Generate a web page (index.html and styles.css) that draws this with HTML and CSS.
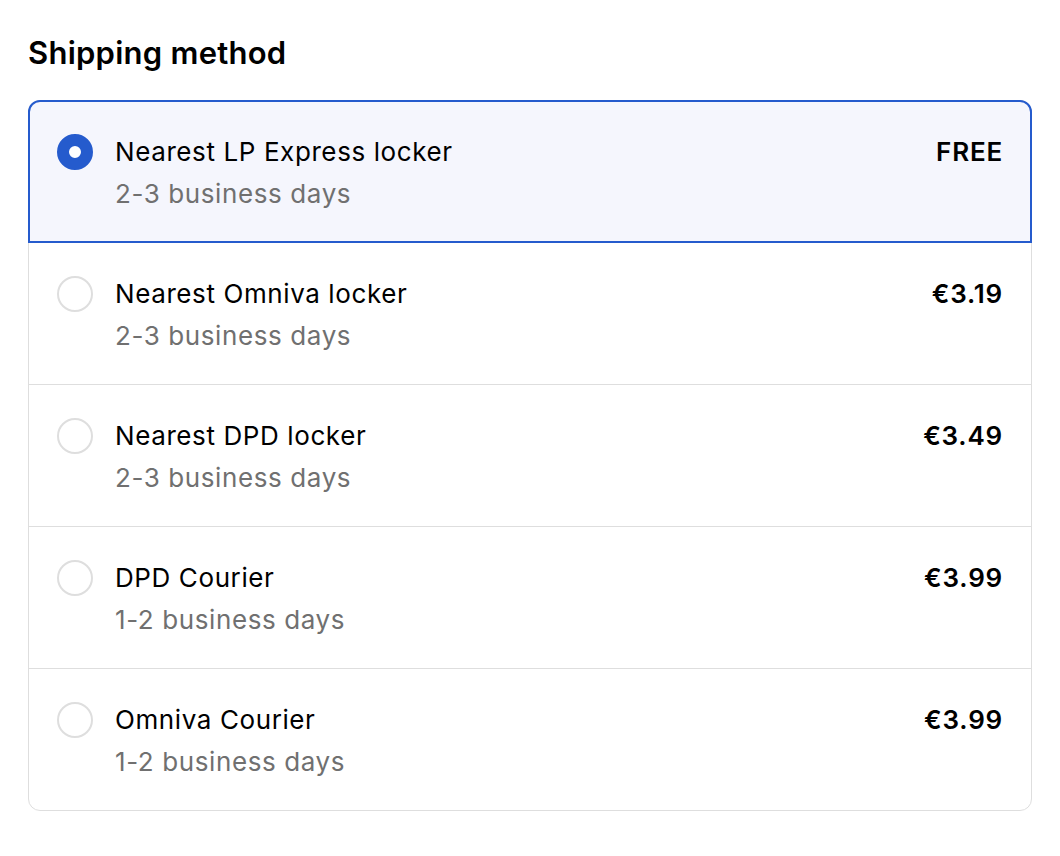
FILE: index.html
```html
<!DOCTYPE html>
<html lang="en">
<head>
<meta charset="utf-8">
<title>Shipping method</title>
<link rel="stylesheet" href="styles.css">
</head>
<body>
<section class="shipping">
  <h2 class="shipping__title">Shipping method</h2>
  <div class="options">
    <label class="option option--selected">
      <span class="radio radio--on"></span>
      <span class="option__text">
        <span class="option__name">Nearest LP Express locker</span>
        <span class="option__eta">2-3 business days</span>
      </span>
      <span class="option__price">FREE</span>
    </label>
    <label class="option">
      <span class="radio"></span>
      <span class="option__text">
        <span class="option__name">Nearest Omniva locker</span>
        <span class="option__eta">2-3 business days</span>
      </span>
      <span class="option__price">€3.19</span>
    </label>
    <label class="option">
      <span class="radio"></span>
      <span class="option__text">
        <span class="option__name">Nearest DPD locker</span>
        <span class="option__eta">2-3 business days</span>
      </span>
      <span class="option__price">€3.49</span>
    </label>
    <label class="option">
      <span class="radio"></span>
      <span class="option__text">
        <span class="option__name">DPD Courier</span>
        <span class="option__eta">1-2 business days</span>
      </span>
      <span class="option__price">€3.99</span>
    </label>
    <label class="option">
      <span class="radio"></span>
      <span class="option__text">
        <span class="option__name">Omniva Courier</span>
        <span class="option__eta">1-2 business days</span>
      </span>
      <span class="option__price">€3.99</span>
    </label>
  </div>
</section>
</body>
</html>
```

FILE: styles.css
```css
* { box-sizing: border-box; }
html, body { margin: 0; padding: 0; background: #fff; }
body {
  font-family: Inter, "Liberation Sans", Arial, sans-serif;
  color: #000;
}
.shipping {
  padding: 31px 28px 0 28px;
  width: 1060px;
}
.shipping__title {
  margin: 0 0 25px 0;
  font-size: 31px;
  line-height: 44px;
  font-weight: 600;
  letter-spacing: 0.25px;
}
.options {
  border: 1px solid #dedede;
  border-radius: 12px;
  width: 1004px;
}
.option {
  position: relative;
  display: flex;
  align-items: flex-start;
  height: 142px;
  padding: 30px 28px 0 28px;
  border-bottom: 1px solid #dedede;
}
.option:last-child { border-bottom: none; height: 141px; }
.option--selected {
  background: #f5f6fd;
  border-radius: 11px 11px 0 0;
}
.option--selected::after {
  content: "";
  position: absolute;
  top: -1px; left: -1px; right: -1px; bottom: -1px;
  border: 2px solid #255bcd;
  border-radius: 12px 12px 0 0;
  pointer-events: none;
}
.radio {
  flex: none;
  width: 36px;
  height: 36px;
  border-radius: 50%;
  border: 2px solid #dedede;
  background: #fff;
  margin-top: 3px;
  margin-right: 22px;
}
.radio--on {
  border: 12px solid #255bcd;
  background: #fff;
}
.option__text {
  flex: 1;
  display: flex;
  flex-direction: column;
  letter-spacing: 0.6px;
}
.option__name {
  font-size: 26px;
  line-height: 42px;
  color: #000;
}
.option__eta {
  font-size: 26px;
  line-height: 42px;
  color: #707070;
}
.option__price {
  font-size: 26px;
  line-height: 42px;
  font-weight: 600;
  letter-spacing: 0.8px;
}
```
